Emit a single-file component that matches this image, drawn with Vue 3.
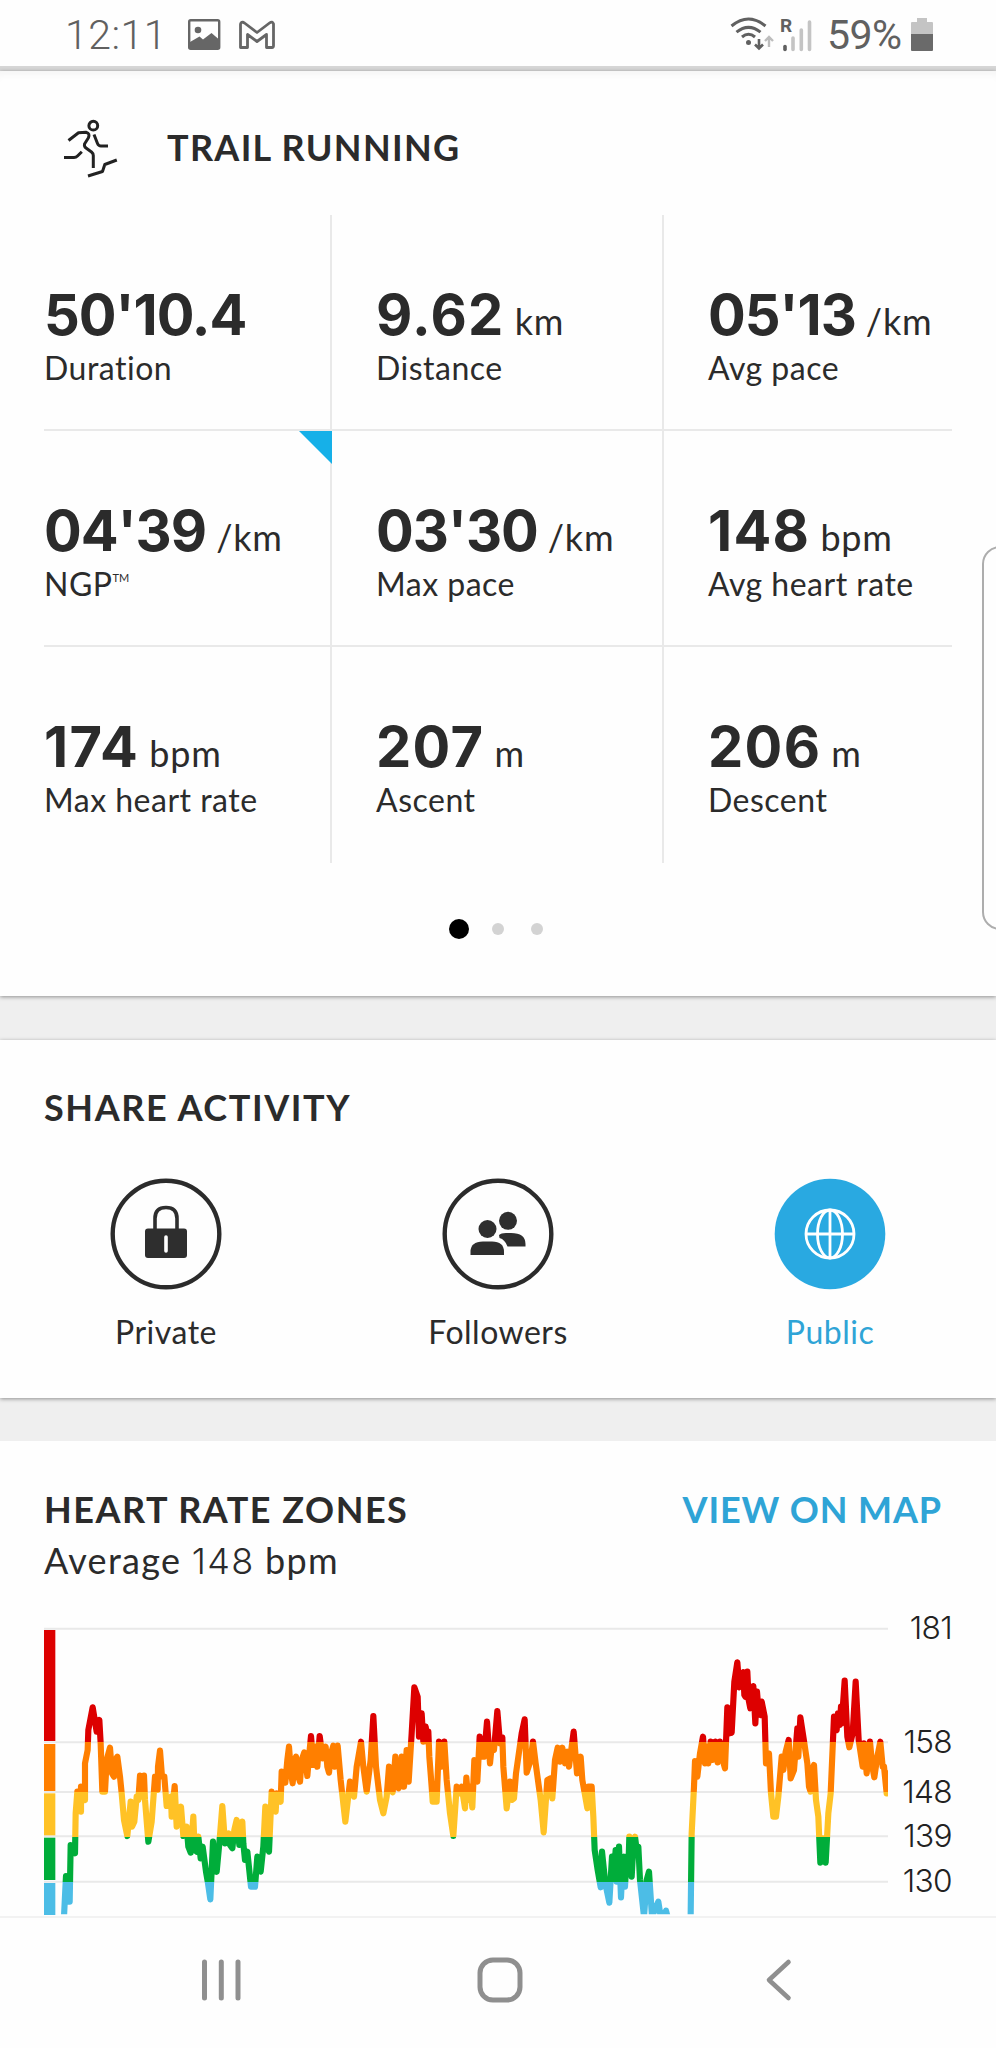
<template>
  <div class="screen">
    <header class="status">
      <span class="status__time">12:11</span>
      <svg class="status__left" width="90" height="34" viewBox="0 0 90 34">
        <rect x="1.2" y="2.2" width="30" height="28.6" rx="1.5" fill="none" stroke="#666" stroke-width="2.4" />
        <circle cx="10" cy="12" r="3.3" fill="#666" />
        <path d="M2 24 L11.5 18.5 L15 21.5 L23.5 15 L30.5 21 V31 H2 Z" fill="#666" />
        <path
          d="M52.5 29.5 V6.5 Q52.5 4 55 4.2 L56.5 5 L69 14.5 L81.5 5 Q84.500 2.800 85.5 6 V27.500 Q85.500 29.5 84 29.5 H78.500 V16.5 L69 23.5 L59.500 16.5 V29.500 Z"
          fill="none" stroke="#666" stroke-width="2.8" stroke-linejoin="round"
        />
      </svg>
      <svg class="status__signal" width="86" height="40" viewBox="0 0 86 40">
        <g fill="none" stroke="#606060" stroke-width="3">
          <path d="M2.500 13 Q19.500 -1 36.500 13" />
          <path d="M7.500 19.200 Q19.500 9.500 31.500 19.200" />
          <path d="M13 24 Q19.500 18.500 26 24" />
          <path d="M30 26 V35 M26 31.500 L30 35.500 L34 31.500" stroke-width="2.6" />
          <path d="M40 34 V24 M36 28 L40 24 L44 28" stroke="#bdbdbd" stroke-width="2.4" />
        </g>
        <circle cx="19.500" cy="29.500" r="2.500" fill="#606060" />
        <g stroke-width="3.6" stroke-linecap="round">
          <path d="M56 33.500 V36.500" stroke="#606060" />
          <path d="M64 25 V36.500 M72.300 17 V36.500 M80.500 9 V36.500" stroke="#c4c4c4" />
        </g>
        <text x="51" y="18.500" class="roaming">R</text>
      </svg>
      <span class="status__battery">59%</span>
      <svg class="status__cell" width="24" height="36" viewBox="0 0 24 36">
        <path d="M7 1 H17 V5 H22 Q23 5 23 6 V17 H1 V6 Q1 5 2 5 H7 Z" fill="#c4c4c4" />
        <path d="M1 17 H23 V33 Q23 34 22 34 H2 Q1 34 1 33 Z" fill="#6a6a6a" />
      </svg>
    </header>

    <section class="card summary">
      <div class="summary__head">
        <svg class="runner" width="56" height="60" viewBox="0 0 56 60">
          <g fill="none" stroke="#222" stroke-width="3" stroke-linejoin="round">
            <circle cx="31.300" cy="7.700" r="4.400" />
            <path d="M6.500 22.500 L16.500 14.800 L24 14.200 Q28.500 15.500 26.300 20 L22.500 26 Q22 28.500 24 30 L29.500 34 Q31.300 35.500 31.300 37.500 V50" />
            <path d="M32 16.500 L35.500 25.500 Q36.500 28 39 28 H46" />
            <path d="M2 39.500 H12 Q14 39.500 15.500 38 L19.800 33.700" />
            <path d="M26 58 L40.500 53.500 L42.800 46.500 L54.800 42" />
          </g>
        </svg>
        <h2 class="heading heading--trail">TRAIL RUNNING</h2>
      </div>
      <div class="metrics">
        <div v-for="m in metrics" :key="m.label" class="metric" :class="{ metricMarked: m.marked }">
          <p class="metric__value">
            <b :class="{ timed: m.timed }">{{ m.value }}</b><span v-if="m.unit" class="metric__unit">{{ m.unit }}</span>
          </p>
          <p class="metric__label">{{ m.label }}<sup v-if="m.marked">TM</sup></p>
        </div>
      </div>
      <div class="dots">
        <i class="dot dotActive"></i>
        <i class="dot"></i>
        <i class="dot"></i>
      </div>
    </section>

    <section class="card share">
      <h2 class="heading heading--share">SHARE ACTIVITY</h2>
      <div class="share__options">
        <div class="option">
          <svg width="112" height="112" viewBox="0 0 112 112">
            <circle cx="56" cy="56" r="53.300" fill="none" stroke="#2b2b2b" stroke-width="4.400" />
            <path d="M45 51 V40.500 Q45 29.500 56 29.500 Q67 29.500 67 40.500 V51" fill="none" stroke="#2e2e2e" stroke-width="3.600" />
            <rect x="35" y="50.500" width="42" height="29.500" rx="3" fill="#2e2e2e" />
            <path d="M56 59 V73" stroke="#fff" stroke-width="3.600" stroke-linecap="round" />
          </svg>
          <span>Private</span>
        </div>
        <div class="option">
          <svg width="112" height="112" viewBox="0 0 112 112">
            <circle cx="56" cy="56" r="53.300" fill="none" stroke="#2b2b2b" stroke-width="4.400" />
            <g fill="#2e2e2e">
              <circle cx="66" cy="42.800" r="9" />
              <circle cx="45.500" cy="51" r="9" />
              <path d="M28.500 77 V74 Q28.500 63.500 41 63.500 H50 Q62 63.500 62 74 V77 Z" />
              <path d="M57 57 Q59 55 64 55 H69 Q83.500 55 83.500 66 V68.500 H65.500 Q63 61.500 57.500 60 Z" />
            </g>
          </svg>
          <span>Followers</span>
        </div>
        <div class="option optionActive">
          <svg width="112" height="112" viewBox="0 0 112 112">
            <circle cx="56" cy="56" r="55.300" fill="#29a9e1" />
            <g fill="none" stroke="#fff" stroke-width="2.800">
              <circle cx="56" cy="56" r="24" />
              <ellipse cx="56" cy="56" rx="12.500" ry="24" />
              <path d="M56 32 V80 M32 56 H80" />
            </g>
          </svg>
          <span>Public</span>
        </div>
      </div>
    </section>

    <section class="card zones">
      <div class="zones__head">
        <h2 class="heading heading--zones">HEART RATE ZONES</h2>
        <a class="heading map">VIEW ON MAP</a>
      </div>
      <p class="average">Average <span>148</span> bpm</p>
      <svg class="chart" width="908" height="315" viewBox="42 0 2724 945">
        <defs>
          <linearGradient id="zoneFill" gradientUnits="userSpaceOnUse" x1="0" y1="0" x2="0" y2="1000">
            <template v-for="z in zones" :key="z.color">
              <stop :offset="z.from / 1000" :stop-color="z.color" />
              <stop :offset="z.to / 1000" :stop-color="z.color" />
            </template>
          </linearGradient>
          <clipPath id="plot"><rect x="42" y="0" width="2532" height="943" /></clipPath>
        </defs>
        <path v-for="t in ticks" :key="t.bpm" :d="`M42 ${t.y} H2574`" stroke="#e9e9e9" stroke-width="6" />
        <rect v-for="z in zones" :key="z.color" x="42" :y="z.top" width="34" :height="z.bottom - z.top" :fill="z.color" />
        <polyline :points="trace" clip-path="url(#plot)" class="trace" />
        <text v-for="t in ticks" :key="t.bpm" x="2766" :y="t.y + 32" class="tick">{{ t.bpm }}</text>
      </svg>
    </section>

    <nav class="nav">
      <svg width="40" height="46" viewBox="0 0 40 46">
        <path d="M3.500 5 V41 M20.300 5 V41 M37 5 V41" stroke="#8f8f8f" stroke-width="5" stroke-linecap="round" />
      </svg>
      <svg class="nav__home" width="46" height="46" viewBox="0 0 46 46">
        <rect x="3" y="3" width="40" height="40" rx="13" fill="none" stroke="#8f8f8f" stroke-width="5" />
      </svg>
      <svg class="nav__back" width="28" height="46" viewBox="0 0 28 46">
        <path d="M23.500 5 L4 23 L23.500 41" fill="none" stroke="#8f8f8f" stroke-width="4.600" stroke-linecap="round" stroke-linejoin="round" />
      </svg>
    </nav>

    <div class="edge"></div>
  </div>
</template>

<script setup>
const metrics = [
  { value: "50'10.4", label: "Duration", timed: true },
  { value: "9.62", unit: "km", label: "Distance" },
  { value: "05'13", unit: "/km", label: "Avg pace", timed: true },
  { value: "04'39", unit: "/km", label: "NGP", timed: true, marked: true },
  { value: "03'30", unit: "/km", label: "Max pace", timed: true },
  { value: "148", unit: "bpm", label: "Avg heart rate" },
  { value: "174", unit: "bpm", label: "Max heart rate" },
  { value: "207", unit: "m", label: "Ascent" },
  { value: "206", unit: "m", label: "Descent" },
];

const ticks = [
  { bpm: 181, y: 86 },
  { bpm: 158, y: 427 },
  { bpm: 148, y: 576 },
  { bpm: 139, y: 709 },
  { bpm: 130, y: 845 },
];

// from/to colour the line, top/bottom size the bar on the left
const zones = [
  { color: "#dd0000", from: 0, to: 426, top: 90, bottom: 423 },
  { color: "#ff7f00", from: 426, to: 576, top: 432, bottom: 573 },
  { color: "#ffc226", from: 576, to: 710, top: 580, bottom: 706 },
  { color: "#00ad3a", from: 710, to: 846, top: 713, bottom: 840 },
  { color: "#4cbde6", from: 846, to: 1000, top: 849, bottom: 945 },
];

// heart rate samples, each part starts at its own offset
const parts = [
  {
    offset: 0,
    points:
      "102,950 108,828 110,905 119,905 122,735 135,760 137,640 142,575 153,635 153,560 165,600 165,490 173,450 175,390 188,322 200,395 208,360 212,430 217,575 225,575 230,480 240,443 246,520 252,530 256,480 262,470 270,530 275,580 282,660 292,708 302,605 306,680 313,665 320,590 325,600 330,527 336,590 342,527 345,600 355,725 365,665 375,530 383,570 384,500 390,452 396,530 403,530 410,618 423,590 425,650 434,558 440,680 453,620 460,708 470,680 475,740 482,758 490,650 494,750 500,755 505,710 512,775 518,740 528,815 534,850 541,898 549,725 553,800 560,815 568,730 577,618 585,730 596,700 600,735 607,745 613,690 620,660 628,735 637,665 640,730 645,780 652,755 663,860 675,860 682,770 692,815 700,740 706,620 711,740 717,755 725,575 731,620 737,635 740,580 752,605 755,515 766,548 772,480 777,440 783,520 788,550 794,480 798,470 805,530 810,545 815,480 823,457 832,528 838,460 843,408 850,495 857,440 862,500 869,408 878,475 887,440 892,500 897,518 903,460 910,437 915,500 923,437 932,540 946,665 960,545 972,590 980,500",
  },
  {
    offset: 900,
    points:
      "93,425 100,500 110,575 122,480 130,348 138,500 150,600 160,640 170,590 177,500 182,560 188,577 196,470 200,550 206,565 215,470 222,560 230,450 236,545 245,400 253,262 263,290 267,410 275,340 280,425 287,380 295,430 295,395 298,470 305,560 308,605 320,605 327,425 335,500 343,425 350,540 360,640 370,708 380,560 388,580 395,560 405,625 409,533 415,600 420,560 427,622 433,480 442,545 449,410 455,470 462,470 471,365 480,490 485,440 492,450 502,333 510,430 517,412 520,500 530,625 540,545 546,600 552,595 558,520 575,400 584,358 590,518 602,480 609,425 617,490 632,600 641,697 652,540 662,535 667,595 675,480 683,443 690,485 697,443 705,490 712,455 717,500 731,395 741,520 752,470 757,540 772,625 775,560 785,560 790,650 794,750 803,810 812,862 816,755 826,850 838,908 846,770 851,830 857,750 860,845 867,740 873,892 878,790 882,770 885,860 890,770 895,810 898,710 905,830 910,740 915,710 920,750 925,740 930,840 942,950 950,840 957,815 966,950",
  },
  {
    offset: 1830,
    points:
      "55,905 62,950 70,950 78,932 85,960 120,1000 150,1000 152,945 155,700 162,560 165,483 172,530 180,460 189,410 195,490 200,440 205,490 212,425 218,480 226,425 233,487 240,425 248,480 255,505 262,322 268,400 275,398 283,245 292,187 298,262 304,225 310,217 313,285 316,290 322,215 326,300 331,325 340,258 346,370 351,275 356,335 362,345 365,305 374,350 378,490 387,460 393,580 400,650 408,650 415,590 425,470 430,510 437,455 446,420 452,535 462,510 472,385 475,470 481,352 493,430 502,490 507,560 512,575 516,510 522,495 528,600 535,650 541,788 549,715 557,788 565,640 572,580 582,350 586,385 590,390 594,340 599,375 603,320 605,370 614,242 622,410 628,442 638,400 647,245 656,420 668,500 672,430 680,520 690,425 697,500 703,532 712,470 721,425 728,500 732,500 740,580 742,520",
  },
];

const trace = parts
  .flatMap(({ offset, points }) =>
    points.split(" ").map((p) => {
      const [x, y] = p.split(",").map(Number);
      return `${x + offset},${y}`;
    })
  )
  .join(" ");
</script>

<style>
body {
  margin: 0;
  background: #fff;
}
</style>

<style scoped>
.screen {
  position: relative;
  width: 996px;
  height: 2048px;
  overflow: hidden;
  display: flex;
  flex-direction: column;
  background: #efefef;
  color: #2b2b2b;
  font-family: Lato, "Liberation Sans", sans-serif;
  font-variant-ligatures: none;
}
.screen * {
  box-sizing: border-box;
}
p,
h2 {
  margin: 0;
}
svg {
  display: block;
  flex: none;
}

.status {
  height: 71px;
  flex: none;
  display: flex;
  align-items: flex-start;
  padding: 0 62px 0 65px;
  background: #fefefe;
  border-bottom: 5px solid #d6d6d6;
  font-family: Roboto, sans-serif;
  font-size: 41px;
  font-weight: 350;
  line-height: 71px;
  color: #606060;
}
.status__time {
  width: 123px;
  letter-spacing: 0.5px;
}
.status__left {
  margin-top: 18px;
}
.status__signal {
  margin: 13px 12px 0 auto;
}
.status__battery {
  width: 83px;
  font-weight: 400;
  letter-spacing: -0.5px;
}
.status__cell {
  margin-top: 17px;
}
.roaming {
  font: 700 19px Roboto, sans-serif;
  fill: #606060;
}

.card {
  flex: none;
  background: #fefefe;
  box-shadow: 0 1px 4px rgba(0, 0, 0, 0.4);
}
.heading {
  font-size: 36px;
  font-weight: 700;
  line-height: 44px;
  white-space: nowrap;
}

.summary {
  height: 925px;
  box-shadow: 0 1px 4px rgba(0, 0, 0, 0.4), inset 0 8px 8px -6px #f2f2f2;
}
.summary__head {
  height: 144px;
  display: flex;
  padding: 47px 0 0 62px;
}
.runner {
  margin-right: 49px;
}
.heading--trail {
  margin-top: 7px;
  letter-spacing: 1.3px;
}
.heading--share {
  letter-spacing: 1.6px;
}
.heading--zones {
  letter-spacing: 1.5px;
}
.metrics {
  display: grid;
  grid-template-columns: repeat(3, 332px);
  grid-auto-rows: 216px;
}
.metric {
  position: relative;
  padding: 67px 0 0 44px;
}
/* cell separators */
.metric::before {
  content: "";
  position: absolute;
  left: 0;
  right: 0;
  bottom: 0;
  height: 2px;
  background: #e9e9e9;
}
.metric:nth-child(3n + 1)::before {
  left: 44px;
}
.metric:nth-child(3n)::before {
  right: 44px;
}
.metric:nth-child(n + 7)::before {
  display: none;
}
.metric:not(:nth-child(3n)) {
  background: linear-gradient(#e9e9e9, #e9e9e9) right top / 2px 100% no-repeat;
}
.metricMarked::after {
  content: "";
  position: absolute;
  top: 0;
  right: 0;
  border-top: 33px solid #16b0e8;
  border-left: 33px solid transparent;
}
.metric__value {
  height: 66px;
  line-height: 66px;
  white-space: nowrap;
}
.metric__value b {
  font-family: Inter, sans-serif;
  font-size: 56px;
  letter-spacing: 1.3px;
}
.metric__value .timed {
  letter-spacing: -1px;
}
.metric__unit {
  margin-left: 10px;
  font-size: 36px;
  letter-spacing: 0.8px;
}
.metric__label {
  height: 40px;
  font-size: 32px;
  line-height: 40px;
  letter-spacing: 0.5px;
}
.metric__label sup {
  font-size: 11px;
  line-height: 0;
  letter-spacing: 0;
  vertical-align: 14px;
}
.dots {
  display: flex;
  align-items: center;
  height: 20px;
  margin-top: 56px;
  padding-left: 449px;
}
.dot {
  width: 12px;
  height: 12px;
  margin-right: 27px;
  border-radius: 50%;
  background: #d3d3d3;
}
.dotActive {
  width: 20px;
  height: 20px;
  margin-right: 23px;
  background: #000;
}

.share {
  height: 358px;
  margin-top: 44px;
  padding-top: 45px;
}
.share .heading {
  padding-left: 44px;
}
.share__options {
  display: grid;
  grid-template-columns: repeat(3, 332px);
  margin-top: 49px;
}
.option {
  display: flex;
  flex-direction: column;
  align-items: center;
  font-size: 32px;
  line-height: 40px;
  letter-spacing: 0.5px;
}
.option span {
  margin-top: 22px;
}
.optionActive {
  color: #2fa4d6;
}

.zones {
  flex: none;
  height: 475px;
  margin-top: 43px;
  padding: 46px 44px 0;
  box-shadow: none;
}
.zones__head {
  display: flex;
  justify-content: space-between;
}
.map {
  margin-right: 10px;
  letter-spacing: 0.9px;
  color: #2fa4d6;
}
.average {
  height: 52px;
  padding-top: 2px;
  font-size: 36px;
  line-height: 54px;
  letter-spacing: 1.3px;
}
.average span {
  font-family: Inter, sans-serif;
  font-weight: 350;
}
.chart {
  margin-top: 17px;
}
.trace {
  fill: none;
  stroke: url(#zoneFill);
  stroke-width: 18.5;
  stroke-linejoin: round;
  stroke-linecap: round;
}
.tick {
  font: 350 95px Inter, sans-serif;
  letter-spacing: -2px;
  fill: #222;
  text-anchor: end;
}

.nav {
  flex: 1;
  display: flex;
  padding: 39px 0 0 201px;
  background: #fefefe;
  border-top: 2px solid #f2f2f2;
}
.nav__home {
  margin-left: 236px;
}
.nav__back {
  margin-left: 242px;
}

/* edge panel handle */
.edge {
  position: absolute;
  top: 546px;
  left: 982px;
  width: 40px;
  height: 384px;
  border: 2px solid #adadad;
  border-radius: 18px;
  background: #fefefe;
}
</style>
